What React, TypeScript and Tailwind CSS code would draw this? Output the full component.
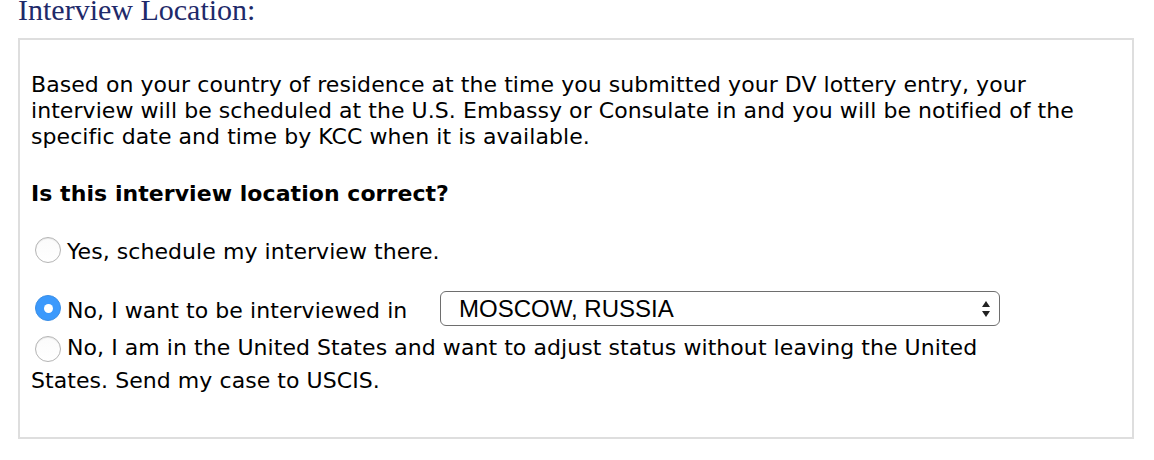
import React from "react";

function Radio({ checked = false }: { checked?: boolean }) {
  if (checked) {
    return (
      <span className="flex items-center justify-center w-[26px] h-[26px] rounded-full bg-[#3b99fc] border border-[#3a8ee6] shrink-0 box-border">
        <span className="w-[9px] h-[9px] rounded-full bg-white" />
      </span>
    );
  }
  return (
    <span className="block w-[26px] h-[26px] rounded-full border border-[#b4b4b4] bg-gradient-to-b from-[#fbfbfb] to-white shadow-[inset_0_1px_1px_rgba(0,0,0,0.08)] shrink-0 box-border" />
  );
}

export default function App() {
  const body = { fontFamily: '"DejaVu Sans", Verdana, sans-serif' };
  return (
    <div className="w-[1154px] h-[460px] bg-white overflow-hidden">
      <div
        className="pl-[18px] text-[30px] leading-[30px] mt-[-5px] text-[#1f2a6a]"
        style={{ fontFamily: '"Liberation Serif", "Times New Roman", serif' }}
      >
        Interview Location:
      </div>
      <div
        className="ml-[18px] mt-[13px] w-[1116px] h-[401px] border-2 border-[#dedede] box-border pl-[11px] pr-[11px] text-black text-[22px] leading-[26px] tracking-[0.06px]"
        style={body}
      >
        <p className="mt-[32px]">
          Based on your country of residence at the time you submitted your DV lottery entry, your interview will be
          scheduled at the U.S. Embassy or Consulate in and you will be notified of the specific date and time by KCC
          when it is available.
        </p>
        <p className="mt-[31px] font-bold">Is this interview location correct?</p>
        <div className="mt-[30px] flex items-start">
          <span className="ml-[4px] mr-[6px] flex">
            <Radio />
          </span>
          <span className="mt-[2px]">Yes, schedule my interview there.</span>
        </div>
        <div className="mt-[26px] flex items-start">
          <span className="ml-[4px] mr-[6px] mt-[4px] flex">
            <Radio checked />
          </span>
          <span className="mt-[7px] w-[373px] shrink-0">No, I want to be interviewed in</span>
          <div
            className="w-[560px] h-[35px] rounded-[6px] border border-[#6e6e6e] flex items-center justify-between pl-[18px] pr-[8px] box-border text-[24px] leading-[26px] tracking-normal text-black bg-white"
            style={{ fontFamily: '"Liberation Sans", Arial, sans-serif' }}
          >
            <span>MOSCOW, RUSSIA</span>
            <svg width="10" height="18" viewBox="0 0 10 18" className="block">
              <path d="M5 1 L9 7 L1 7 Z" fill="#222" />
              <path d="M1 11 L9 11 L5 17 Z" fill="#222" />
            </svg>
          </div>
        </div>
        <p className="mt-[5px] leading-[33px] w-[1000px]">
          <span className="inline-block ml-[4px] mr-[6px] align-[-7px] w-[26px] h-[26px]">
            <Radio />
          </span>
          No, I am in the United States and want to adjust status without leaving the United States. Send my case to
          USCIS.
        </p>
      </div>
    </div>
  );
}
